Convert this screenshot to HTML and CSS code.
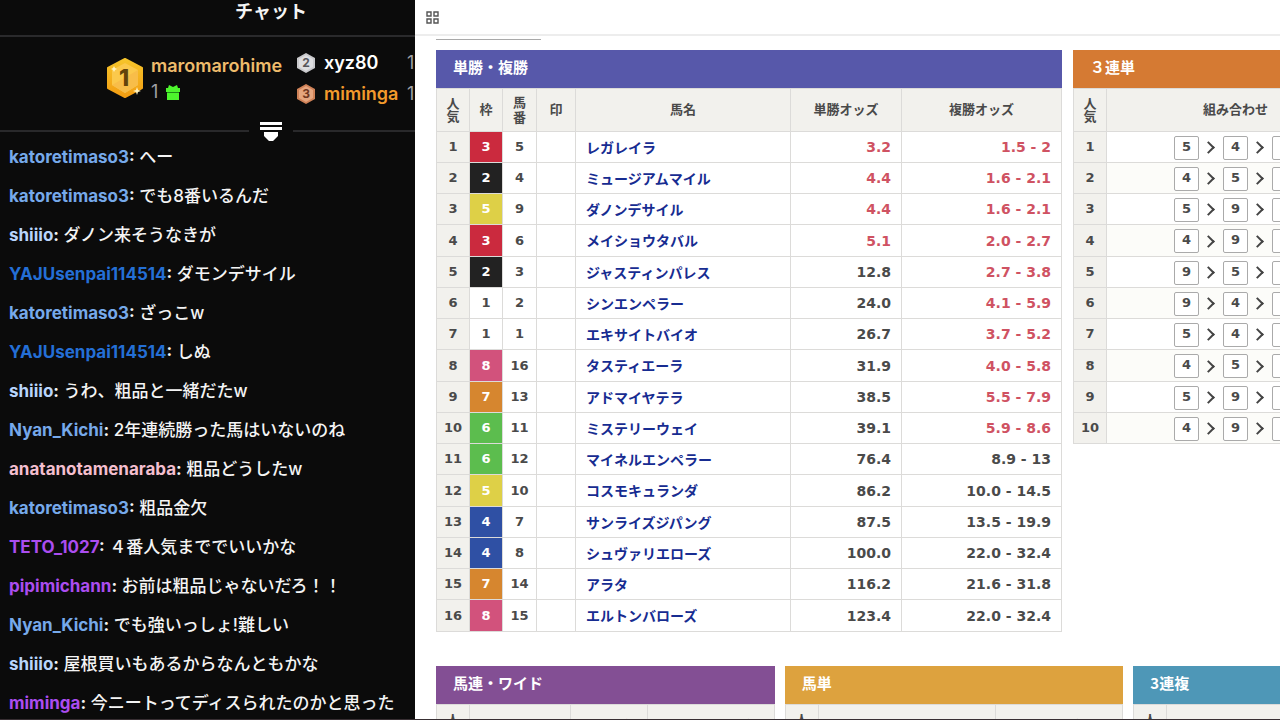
FILE: index.html
```html
<!DOCTYPE html>
<html lang="ja">
<head>
<meta charset="utf-8">
<title>オッズ</title>
<link rel="stylesheet" href="styles.css">
</head>
<body>
<div class="screen">
<aside class="chat">
  <div class="chat-panel">
    <h1 class="chat-title">チャット</h1>
    <section class="leaders">
      <svg class="medal-large" viewBox="0 0 36 42" aria-hidden="true">
        <defs><linearGradient id="gold" x1="0" y1="0" x2="0" y2="1"><stop offset="0" stop-color="#f6c52b"/><stop offset="1" stop-color="#f39d12"/></linearGradient></defs>
        <path d="M18 2 35 11V31L18 40 1 31V11Z" fill="url(#gold)" stroke="url(#gold)" stroke-linejoin="round" stroke-width="2"/>
        <path d="M18 6 31 13V28L18 36 5 28V13Z" fill="#fbc94c"/>
        <path d="M31 13V28L18 36 5 28Z" fill="#f8bd49"/>
        <text x="17" y="29" text-anchor="middle" class="medal-digit-large">1</text>
        <path d="M30 30l1 3 3 1-3 1-1 3-1-3-3-1 3-1zM7 9l1 2 2 1-2 1-1 2-1-2-2-1 2-1z" fill="#fff3c0"/>
      </svg>
      <div class="leader-first">
        <span class="leader-name gold">maromarohime</span>
        <span class="leader-count">1
          <svg class="gift" viewBox="0 0 14 15" aria-hidden="true"><path d="M3 0 7 2 11 0 12 3H14V7H0V3H2ZM1 8H13V15H1Z" fill="#4df52d"/><path d="M1 7H13V8H1Z" fill="#1f8a17"/></svg>
        </span>
      </div>
      <ul class="leader-rest">
        <li>
          <svg class="medal" viewBox="0 0 20 22" aria-hidden="true"><path d="M10 1 19 6V16L10 21 1 16V6Z" fill="#c9c9cc"/><path d="M10 3 17 7V15L10 19 3 15V7Z" fill="#dedee0"/><text x="10" y="15" text-anchor="middle" class="medal-digit silver">2</text></svg>
          <span class="leader-name white">xyz80</span><span class="leader-count">1</span>
        </li>
        <li>
          <svg class="medal" viewBox="0 0 20 22" aria-hidden="true"><path d="M10 1 19 6V16L10 21 1 16V6Z" fill="#cf8157"/><path d="M10 3 17 7V15L10 19 3 15V7Z" fill="#e6a57e"/><text x="10" y="15" text-anchor="middle" class="medal-digit bronze">3</text></svg>
          <span class="leader-name orange">miminga</span><span class="leader-count">1</span>
        </li>
      </ul>
    </section>
    <div class="divider">
      <button class="collapse" aria-label="折りたたむ"><svg viewBox="0 0 22 19" aria-hidden="true"><path d="M0 0H22V3H0ZM0 5H22V8H0ZM4 10H18V14L13 19H9L4 14Z" fill="#fff"/></svg></button>
    </div>
    <ul class="messages">
      <li><b class="sky">katoretimaso3</b><b>:</b> へー</li>
      <li><b class="sky">katoretimaso3</b><b>:</b> でも8番いるんだ</li>
      <li><b class="pale">shiiio</b><b>:</b> ダノン来そうなきが</li>
      <li><b class="blue">YAJUsenpai114514</b><b>:</b> ダモンデサイル</li>
      <li><b class="sky">katoretimaso3</b><b>:</b> ざっこw</li>
      <li><b class="blue">YAJUsenpai114514</b><b>:</b> しぬ</li>
      <li><b class="pale">shiiio</b><b>:</b> うわ、粗品と一緒だたw</li>
      <li><b class="sky">Nyan_Kichi</b><b>:</b> 2年連続勝った馬はいないのね</li>
      <li><b class="pink">anatanotamenaraba</b><b>:</b> 粗品どうしたw</li>
      <li><b class="sky">katoretimaso3</b><b>:</b> 粗品金欠</li>
      <li><b class="purple">TETO_1027</b><b>:</b> ４番人気まででいいかな</li>
      <li><b class="purple">pipimichann</b><b>:</b> お前は粗品じゃないだろ！！</li>
      <li><b class="sky">Nyan_Kichi</b><b>:</b> でも強いっしょ!難しい</li>
      <li><b class="pale">shiiio</b><b>:</b> 屋根買いもあるからなんともかな</li>
      <li><b class="purple">miminga</b><b>:</b> 今ニートってディスられたのかと思った</li>
    </ul>
  </div>
</aside>
<main class="page">
  <header class="toolbar">
    <button class="apps" aria-label="アプリ"><svg viewBox="0 0 13 13" aria-hidden="true"><path d="M1 1H5V5H1ZM8 1H12V5H8ZM1 8H5V12H1ZM8 8H12V12H8Z" fill="none" stroke="#555" stroke-width="1.4"/></svg></button>
  </header>
  <div class="content">
    <div class="tab-edge"></div>
    <div class="boards top">
      <section class="board board-win">
        <h2 class="indigo">単勝・複勝</h2>
        <table class="odds">
          <colgroup><col class="c-rank"><col class="c-rank"><col class="c-num"><col class="c-mark"><col><col class="c-win"><col class="c-place"></colgroup>
          <thead><tr><th class="tight">人<br>気</th><th>枠</th><th>馬<br>番</th><th>印</th><th>馬名</th><th>単勝オッズ</th><th>複勝オッズ</th></tr></thead>
          <tbody>
          <tr><th>1</th><td class="f3">3</td><td>5</td><td></td><td class="name"><a href="#">レガレイラ</a></td><td class="val hot">3.2</td><td class="val hot">1.5 - 2</td></tr>
          <tr><th>2</th><td class="f2">2</td><td>4</td><td></td><td class="name"><a href="#">ミュージアムマイル</a></td><td class="val hot">4.4</td><td class="val hot">1.6 - 2.1</td></tr>
          <tr><th>3</th><td class="f5">5</td><td>9</td><td></td><td class="name"><a href="#">ダノンデサイル</a></td><td class="val hot">4.4</td><td class="val hot">1.6 - 2.1</td></tr>
          <tr><th>4</th><td class="f3">3</td><td>6</td><td></td><td class="name"><a href="#">メイショウタバル</a></td><td class="val hot">5.1</td><td class="val hot">2.0 - 2.7</td></tr>
          <tr><th>5</th><td class="f2">2</td><td>3</td><td></td><td class="name"><a href="#">ジャスティンパレス</a></td><td class="val">12.8</td><td class="val hot">2.7 - 3.8</td></tr>
          <tr><th>6</th><td>1</td><td>2</td><td></td><td class="name"><a href="#">シンエンペラー</a></td><td class="val">24.0</td><td class="val hot">4.1 - 5.9</td></tr>
          <tr><th>7</th><td>1</td><td>1</td><td></td><td class="name"><a href="#">エキサイトバイオ</a></td><td class="val">26.7</td><td class="val hot">3.7 - 5.2</td></tr>
          <tr><th>8</th><td class="f8">8</td><td>16</td><td></td><td class="name"><a href="#">タスティエーラ</a></td><td class="val">31.9</td><td class="val hot">4.0 - 5.8</td></tr>
          <tr><th>9</th><td class="f7">7</td><td>13</td><td></td><td class="name"><a href="#">アドマイヤテラ</a></td><td class="val">38.5</td><td class="val hot">5.5 - 7.9</td></tr>
          <tr><th>10</th><td class="f6">6</td><td>11</td><td></td><td class="name"><a href="#">ミステリーウェイ</a></td><td class="val">39.1</td><td class="val hot">5.9 - 8.6</td></tr>
          <tr><th>11</th><td class="f6">6</td><td>12</td><td></td><td class="name"><a href="#">マイネルエンペラー</a></td><td class="val">76.4</td><td class="val">8.9 - 13</td></tr>
          <tr><th>12</th><td class="f5">5</td><td>10</td><td></td><td class="name"><a href="#">コスモキュランダ</a></td><td class="val">86.2</td><td class="val">10.0 - 14.5</td></tr>
          <tr><th>13</th><td class="f4">4</td><td>7</td><td></td><td class="name"><a href="#">サンライズジパング</a></td><td class="val">87.5</td><td class="val">13.5 - 19.9</td></tr>
          <tr><th>14</th><td class="f4">4</td><td>8</td><td></td><td class="name"><a href="#">シュヴァリエローズ</a></td><td class="val">100.0</td><td class="val">22.0 - 32.4</td></tr>
          <tr><th>15</th><td class="f7">7</td><td>14</td><td></td><td class="name"><a href="#">アラタ</a></td><td class="val">116.2</td><td class="val">21.6 - 31.8</td></tr>
          <tr><th>16</th><td class="f8">8</td><td>15</td><td></td><td class="name"><a href="#">エルトンバローズ</a></td><td class="val">123.4</td><td class="val">22.0 - 32.4</td></tr>
          </tbody>
        </table>
      </section>
      <section class="board board-fill">
        <h2 class="orange-bg">３連単</h2>
        <table class="odds striped">
          <colgroup><col class="c-rank"><col class="c-combo"><col></colgroup>
          <thead><tr><th class="tight">人<br>気</th><th>組み合わせ</th><th>オッズ</th></tr></thead>
          <tbody>
          <tr><th>1</th><td><div class="combo"><span>5</span><i></i><span>4</span><i></i><span>9</span></div></td><td></td></tr>
          <tr><th>2</th><td><div class="combo"><span>4</span><i></i><span>5</span><i></i><span>9</span></div></td><td></td></tr>
          <tr><th>3</th><td><div class="combo"><span>5</span><i></i><span>9</span><i></i><span>4</span></div></td><td></td></tr>
          <tr><th>4</th><td><div class="combo"><span>4</span><i></i><span>9</span><i></i><span>5</span></div></td><td></td></tr>
          <tr><th>5</th><td><div class="combo"><span>9</span><i></i><span>5</span><i></i><span>4</span></div></td><td></td></tr>
          <tr><th>6</th><td><div class="combo"><span>9</span><i></i><span>4</span><i></i><span>5</span></div></td><td></td></tr>
          <tr><th>7</th><td><div class="combo"><span>5</span><i></i><span>4</span><i></i><span>6</span></div></td><td></td></tr>
          <tr><th>8</th><td><div class="combo"><span>4</span><i></i><span>5</span><i></i><span>6</span></div></td><td></td></tr>
          <tr><th>9</th><td><div class="combo"><span>5</span><i></i><span>9</span><i></i><span>6</span></div></td><td></td></tr>
          <tr><th>10</th><td><div class="combo"><span>4</span><i></i><span>9</span><i></i><span>6</span></div></td><td></td></tr>
          </tbody>
        </table>
      </section>
    </div>
    <div class="boards bottom">
      <section class="board board-fill">
        <h2 class="violet">馬連・ワイド</h2>
        <table class="odds">
          <colgroup><col class="c-rank"><col><col class="c-pair"><col class="c-wide"></colgroup>
          <thead><tr><th class="tight">人<br>気</th><th>組み合わせ</th><th>オッズ</th><th>ワイドオッズ</th></tr></thead>
        </table>
      </section>
      <section class="board board-fill">
        <h2 class="amber">馬単</h2>
        <table class="odds">
          <colgroup><col class="c-rank"><col><col class="c-wide"></colgroup>
          <thead><tr><th class="tight">人<br>気</th><th>組み合わせ</th><th>オッズ</th></tr></thead>
        </table>
      </section>
      <section class="board board-fill">
        <h2 class="teal">3連複</h2>
        <table class="odds">
          <colgroup><col class="c-rank"><col><col class="c-pair"></colgroup>
          <thead><tr><th class="tight">人<br>気</th><th>組み合わせ</th><th>オッズ</th></tr></thead>
        </table>
      </section>
    </div>
  </div>
</main>
</div>
</body>
</html>
```
FILE: styles.css
```css
* { box-sizing: border-box; }
body { margin: 0; background: #fff; }
ul { list-style: none; margin: 0; padding: 0; }
button { border: 0; padding: 0; background: none; }
svg { display: block; }

.screen {
  display: flex;
  height: 100vh;
  overflow: hidden;
  border-bottom: 1px solid #382f33;
}

/* chat */
.chat {
  flex: 0 0 415px;
  overflow: hidden;
  background: #0b0b0b;
  color: #f4f4f4;
  font-family: Inter, "Noto Sans CJK JP", sans-serif;
}
.chat-panel { width: 542px; }
.chat-title {
  margin: 0;
  height: 37px;
  padding-top: 1px;
  border-bottom: 2px solid #2a2a2c;
  font-size: 18px;
  line-height: 22px;
  text-align: center;
}
.leaders {
  display: flex;
  align-items: flex-start;
  height: 84px;
  padding: 14px 0 0 107px;
}
.medal-large { width: 36px; height: 42px; margin: 6px 8px 0 0; }
.medal-digit-large { font: 800 23px Inter, sans-serif; fill: #63430b; }
.medal-digit { font: 700 12px Inter, sans-serif; }
.silver { fill: #56565a; }
.bronze { fill: #70371f; }
.leader-first { display: flex; flex-direction: column; width: 145px; padding-top: 1px; }
.leader-name { font-size: 18px; line-height: 27px; font-weight: 600; }
.leader-count {
  display: flex;
  align-items: center;
  gap: 8px;
  font-size: 18px;
  line-height: 26px;
  color: #a0a0a6;
}
.gift { width: 14px; height: 15px; }
.gold { color: #efbc6c; }
.white { color: #fff; }
.orange { color: #f39a2c; }
.leader-rest li { display: flex; align-items: center; height: 31px; margin-top: -4px; }
.leader-rest li + li { margin-top: 0; }
.medal { width: 20px; height: 22px; margin-right: 8px; }
.leader-rest .leader-name { width: 83px; }

.divider { display: flex; align-items: center; gap: 11px; height: 20px; }
.divider::before, .divider::after { content: ""; flex: 1; height: 2px; background: #29292b; }
.collapse svg { width: 22px; height: 19px; }

.messages { padding: 0 9px; font-size: 17px; line-height: 39px; font-weight: 500; white-space: nowrap; margin-top: -3px; }
.messages b { font-weight: 700; }
.messages .sky { color: #76a9ea; }
.messages .pale { color: #b9d5fc; }
.messages .blue { color: #246fd6; }
.messages .pink { color: #f4bfcf; }
.messages .purple { color: #ab4df0; }

/* odds page */
.page {
  flex: 1;
  min-width: 0;
  overflow: hidden;
  color: #4a4a4a;
  font-family: "DejaVu Sans", "Noto Sans CJK JP", sans-serif;
}
.toolbar {
  display: flex;
  align-items: center;
  height: 36px;
  padding-left: 11px;
  border-bottom: 2px solid #ededed;
}
.apps svg { width: 13px; height: 13px; }
.content { width: 1057px; padding: 3px 0 0 21px; }
.tab-edge { width: 105px; height: 11px; border-top: 1px solid #a9a9a9; }
.boards { display: flex; align-items: flex-start; }
.boards.top { gap: 11px; }
.boards.bottom { gap: 10px; margin-top: 34px; }
.board-win { width: 626px; }
.board-fill { flex: 1; min-width: 0; }
.board h2 {
  margin: 0;
  padding: 0 17px 4px;
  color: #fff;
  font-family: "Noto Sans CJK JP", sans-serif;
  font-size: 15px;
  line-height: 34px;
}
.indigo { background: #5758aa; }
.orange-bg { background: #d57a33; }
.violet { background: #834f94; }
.amber { background: #dda23e; }
.teal { background: #4e97b7; }

.odds {
  width: 100%;
  table-layout: fixed;
  border-collapse: collapse;
  font-size: 13px;
  font-weight: 700;
  line-height: 16px;
  text-align: center;
}
.odds th, .odds td { padding: 0; border: 1px solid #dcdbd9; }
.odds th { background: #f2f1ed; }
.odds thead th { height: 43px; padding-bottom: 3px; font-family: "Noto Sans CJK JP", sans-serif; font-weight: 700; line-height: 15px; }
.odds thead .tight { line-height: 13px; }
.odds tbody tr { height: 31px; }
.odds tbody tr:nth-child(4n) { height: 32px; }
.striped tbody tr:nth-child(even) { background: #fcfcf9; }
.c-rank { width: 33px; }
.c-num { width: 34px; }
.c-mark { width: 39px; }
.c-win { width: 111px; }
.c-place { width: 160px; }
.c-combo { width: 258px; }
.c-pair { width: 77px; }
.c-wide { width: 127px; }
.odds .name { padding: 1px 0 0 10px; text-align: left; }
.name a { color: #172c91; font-family: "Noto Sans CJK JP", sans-serif; font-size: 14px; text-decoration: none; }
.odds .val { padding-right: 10px; font-size: 14px; text-align: right; }
.odds .hot { color: #cf5262; }
.f2, .f3, .f4, .f5, .f6, .f7, .f8 { color: #fff; }
.f2 { background: #222; }
.f3 { background: #cb2a3e; }
.f4 { background: #2f50a4; }
.f5 { background: #ded047; }
.f6 { background: #5cbd4e; }
.f7 { background: #d6862f; }
.f8 { background: #d2527c; }

.combo { display: flex; justify-content: center; align-items: center; padding-top: 1px; }
.combo span { width: 25px; height: 24px; border: 1px solid #aaa; border-radius: 2px; background: #fff; line-height: 20px; }
.combo i {
  width: 9px;
  height: 9px;
  margin: 0 10px 0 5px;
  border: solid #444;
  border-width: 2px 2px 0 0;
  transform: rotate(45deg);
}
```
